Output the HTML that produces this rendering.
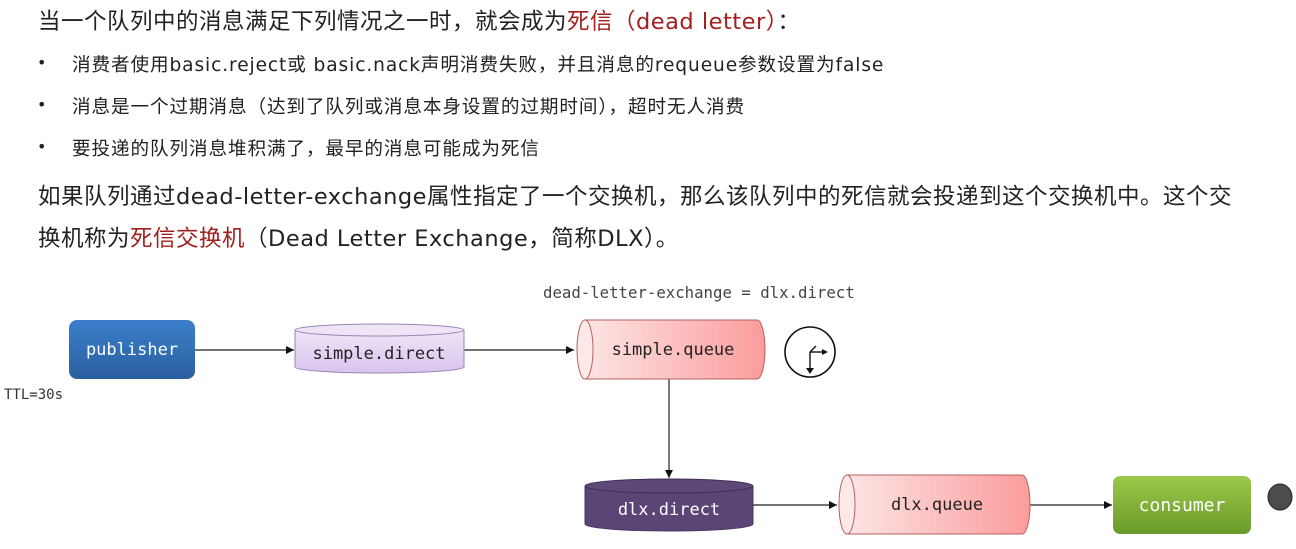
<!DOCTYPE html>
<html><head><meta charset="utf-8"><style>
body{margin:0;width:1296px;height:549px;background:#fff;position:relative;overflow:hidden;font-family:"DejaVu Sans","Noto Sans CJK SC",sans-serif;color:#222}
.t{position:absolute;white-space:nowrap}
.h{font-size:22.5px;left:38px;letter-spacing:0.5px}
.b{font-size:18.6px;left:72px;letter-spacing:0.9px}
.dot{position:absolute;left:37px;font-size:16px}
.red{color:#a0201d}
svg{position:absolute;left:0;top:0}
svg text{font-family:"DejaVu Sans Mono","Liberation Mono",monospace}
</style></head><body>
<div class="t h" style="top:4px">当一个队列中的消息满足下列情况之一时，就会成为<span class="red">死信（dead letter）</span>：</div>
<div class="dot" style="top:53px">•</div><div class="t b" style="top:50px">消费者使用basic.reject或 basic.nack声明消费失败，并且消息的requeue参数设置为false</div>
<div class="dot" style="top:95px">•</div><div class="t b" style="top:92px">消息是一个过期消息（达到了队列或消息本身设置的过期时间），超时无人消费</div>
<div class="dot" style="top:137px">•</div><div class="t b" style="top:134px">要投递的队列消息堆积满了，最早的消息可能成为死信</div>
<div class="t h" style="top:179px">如果队列通过dead-letter-exchange属性指定了一个交换机，那么该队列中的死信就会投递到这个交换机中。这个交</div>
<div class="t h" style="top:221px">换机称为<span class="red">死信交换机</span>（Dead Letter Exchange，简称DLX）。</div>
<svg width="1296" height="549">
<defs>
<linearGradient id="bl" x1="0" y1="0" x2="0" y2="1"><stop offset="0" stop-color="#3b7fcc"/><stop offset="1" stop-color="#2a5f9e"/></linearGradient>
<linearGradient id="gr" x1="0" y1="0" x2="0" y2="1"><stop offset="0" stop-color="#9bc94a"/><stop offset="1" stop-color="#6a9a2a"/></linearGradient>
<linearGradient id="pk" x1="0" y1="0" x2="1" y2="0"><stop offset="0" stop-color="#fde4e4"/><stop offset="1" stop-color="#fb9c9c"/></linearGradient>
<linearGradient id="lv" x1="0" y1="0" x2="0" y2="1"><stop offset="0" stop-color="#efe6f7"/><stop offset="1" stop-color="#d8c3ee"/></linearGradient>
<marker id="a" markerWidth="8" markerHeight="8" refX="8" refY="4" orient="auto" markerUnits="userSpaceOnUse"><path d="M0,0L8,4L0,8z" fill="#111"/></marker>
</defs>
<g stroke="#222" stroke-width="1.2" fill="none" marker-end="url(#a)">
<line x1="195" y1="350" x2="294" y2="350"/>
<line x1="464" y1="350" x2="574" y2="350"/>
<line x1="669" y1="379" x2="669" y2="478"/>
<line x1="753" y1="505" x2="837" y2="505"/>
<line x1="1030" y1="505" x2="1112" y2="505"/>
</g>
<rect x="69" y="320" width="126" height="59" rx="8" fill="url(#bl)"/>
<text x="132" y="355" fill="#fff" font-size="17" text-anchor="middle">publisher</text>
<path d="M295,330 v37 a84.5,6 0 0 0 169,0 v-37" fill="url(#lv)" stroke="#9a85b5"/>
<ellipse cx="379.5" cy="330" rx="84.5" ry="6" fill="#eee5f6" stroke="#9a85b5"/>
<text x="379" y="359" fill="#222" font-size="17" text-anchor="middle">simple.direct</text>
<path d="M585,320 h172 a8,29.5 0 0 1 0,59 h-172 z" fill="url(#pk)" stroke="#b56060"/>
<ellipse cx="585" cy="349.5" rx="8" ry="29.5" fill="#fde8e8" stroke="#b56060"/>
<text x="673" y="355" fill="#222" font-size="17" text-anchor="middle">simple.queue</text>
<circle cx="810" cy="352" r="25" fill="none" stroke="#111" stroke-width="1.6"/>
<g stroke="#111" stroke-width="1.4" fill="none"><line x1="810" y1="352" x2="810" y2="370"/><line x1="810" y1="352" x2="824" y2="352"/><line x1="810" y1="352" x2="816" y2="346"/></g>
<path d="M806,368 L810,374 L814,368z M822,349 L828,352 L822,355z" fill="#111"/>
<path d="M585,486 v38 a84,7 0 0 0 168,0 v-38" fill="#5b4577" stroke="#4a3865"/>
<ellipse cx="669" cy="486" rx="84" ry="7" fill="#5e4878" stroke="#3e2e55"/>
<text x="669" y="515" fill="#fff" font-size="17" text-anchor="middle">dlx.direct</text>
<path d="M847,475 h175 a8,29.5 0 0 1 0,59 h-175 z" fill="url(#pk)" stroke="#b56060"/>
<ellipse cx="847" cy="504.5" rx="8" ry="29.5" fill="#fde8e8" stroke="#b56060"/>
<text x="937" y="510" fill="#222" font-size="17" text-anchor="middle">dlx.queue</text>
<rect x="1113" y="476" width="138" height="58" rx="7" fill="url(#gr)"/>
<text x="1182" y="511" fill="#fff" font-size="18" text-anchor="middle">consumer</text>
<ellipse cx="1280" cy="497" rx="12" ry="13" fill="#4a4d4c" stroke="#222"/>
<text x="543" y="298" fill="#444" font-size="15.7">dead-letter-exchange = dlx.direct</text>
<text x="4" y="399" fill="#333" font-size="14">TTL=30s</text>
</svg>
</body></html>
